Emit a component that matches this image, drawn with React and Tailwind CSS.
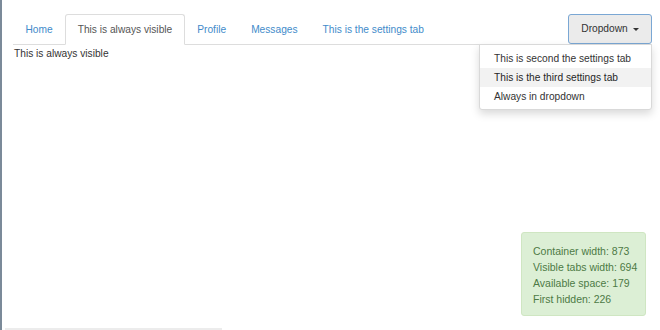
import { useState } from 'react';

const tabs = [
  { label: 'Home' },
  { label: 'This is always visible', active: true },
  { label: 'Profile' },
  { label: 'Messages' },
  { label: 'This is the settings tab' },
];

const menuItems = ['This is second the settings tab', 'This is the third settings tab', 'Always in dropdown'];

export default function App() {
  const [hovered] = useState(1);

  return (
    <div
      className="relative h-[330px] w-[660px] overflow-hidden border-l-2 border-[#7b8a99] bg-white text-[10.2px] text-[#333]"
      style={{ fontFamily: '"Liberation Sans", Arial, sans-serif' }}
    >
      <div className="pl-[11px] pr-[8px] pt-[14px]">
        <div className="relative flex h-[31px] border-b border-[#ddd]">
          <ul className="flex">
            {tabs.map((tab) => (
              <li key={tab.label} className="-mb-px">
                <a
                  className={
                    tab.active
                      ? 'flex h-[31px] items-center rounded-t-[3px] border border-[#ddd] border-b-white bg-white px-[11.5px] text-[#555]'
                      : 'flex h-[31px] items-center rounded-t-[3px] border border-transparent px-[11.5px] text-[#428bca]'
                  }
                >
                  {tab.label}
                </a>
              </li>
            ))}
          </ul>

          <div className="relative ml-auto">
            <button
              type="button"
              className="flex h-[30px] w-[84px] items-center justify-center gap-[5px] rounded-[3px] border border-[#7aa7d4] bg-[#ebebeb] text-[#333]"
            >
              Dropdown
              <span className="h-0 w-0 border-x-[3px] border-t-[3px] border-x-transparent border-t-[#333]" />
            </button>
            <ul className="absolute right-0 top-[30px] z-10 w-[173px] rounded-b-[3px] border border-[#d9d9d9] bg-white pb-[3px] pt-[4px] shadow-[0_4px_8px_rgba(0,0,0,0.15)]">
              {menuItems.map((item, index) => (
                <li
                  key={item}
                  className={
                    index === hovered
                      ? 'flex h-[19px] items-center whitespace-nowrap bg-[#f2f2f2] px-[14px] text-[#262626]'
                      : 'flex h-[19px] items-center whitespace-nowrap px-[14px] text-[#333]'
                  }
                >
                  {item}
                </li>
              ))}
            </ul>
          </div>
        </div>

        <p className="pl-[1px] pt-px leading-[15px]">This is always visible</p>
      </div>

      <div className="absolute bottom-[14px] right-[14px] w-[125px] whitespace-nowrap rounded-[3px] border border-[#cfe6c2] bg-[#dcefd5] px-[11px] pb-[8px] pt-[10px] text-[10.5px] leading-[16px] text-[#4d7a45]">
        <div>Container width: 873</div>
        <div>Visible tabs width: 694</div>
        <div>Available space: 179</div>
        <div>First hidden: 226</div>
      </div>

      <div className="absolute bottom-0 left-[3px] h-[2px] w-[217px] bg-[#ececec]" />
    </div>
  );
}
